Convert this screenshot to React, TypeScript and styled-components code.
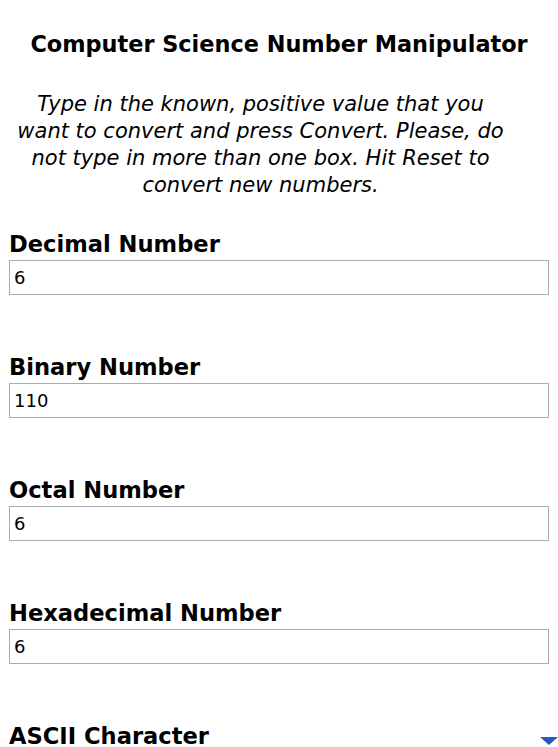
import React, { useState } from 'react';
import styled, { createGlobalStyle } from 'styled-components';

const GlobalStyle = createGlobalStyle`
    body {
        margin: 0;
        background: #ffffff;
        font-family: 'DejaVu Sans', 'Liberation Sans', sans-serif;
        color: #000000;
    }
`;

const Page = styled.div`
    padding: 31px 9px 0 9px;
    overflow: hidden;
`;

const Title = styled.h3`
    margin: 0;
    text-align: center;
    font-size: 22.4px;
    line-height: 26px;
    font-weight: bold;
`;

// the intro text sits a bit left of centre in the reference
const Intro = styled.p`
    margin: 34px 40px 0 3px;
    text-align: center;
    font-style: italic;
    font-size: 21px;
    line-height: 27px;
`;

const Field = styled.div`
    margin-top: 32px;
    & + & {
        margin-top: 59px;
    }
`;

const LabelRow = styled.div`
    display: flex;
    justify-content: space-between;
    align-items: center;
`;

const Label = styled.label`
    display: block;
    font-size: 22.6px;
    line-height: 26px;
    font-weight: bold;
`;

const Arrow = styled.span`
    width: 0;
    height: 0;
    margin-right: -9px;
    margin-top: 10px;
    border-left: 9px solid transparent;
    border-right: 9px solid transparent;
    border-top: 8px solid #2858c0;
`;

const TextBox = styled.input`
    display: block;
    box-sizing: border-box;
    width: 100%;
    height: 35px;
    margin-top: 3px;
    padding: 0 4px;
    border: 1px solid #a9adb1;
    border-radius: 0;
    font-family: 'DejaVu Sans', sans-serif;
    font-size: 18px;
    color: #000000;
    background: #ffffff;
    outline: none;
`;

const fields = [
    { label: 'Decimal Number', value: '6' },
    { label: 'Binary Number', value: '110' },
    { label: 'Octal Number', value: '6' },
    { label: 'Hexadecimal Number', value: '6' },
];

const App = () => {
    const [values, setValues] = useState(fields.map((f) => f.value));

    return (
        <Page>
            <GlobalStyle />
            <Title>Computer Science Number Manipulator</Title>
            <Intro>
                Type in the known, positive value that you want to convert and press Convert.
                Please, do not type in more than one box. Hit Reset to convert new numbers.
            </Intro>
            {fields.map((f, i) => (
                <Field key={f.label}>
                    <Label>{f.label}</Label>
                    <TextBox
                        value={values[i]}
                        onChange={(e) => {
                            const next = [...values];
                            next[i] = e.target.value;
                            setValues(next);
                        }}
                    />
                </Field>
            ))}
            <Field>
                <LabelRow>
                    <Label>ASCII Character</Label>
                    <Arrow />
                </LabelRow>
            </Field>
        </Page>
    );
};

export default App;
